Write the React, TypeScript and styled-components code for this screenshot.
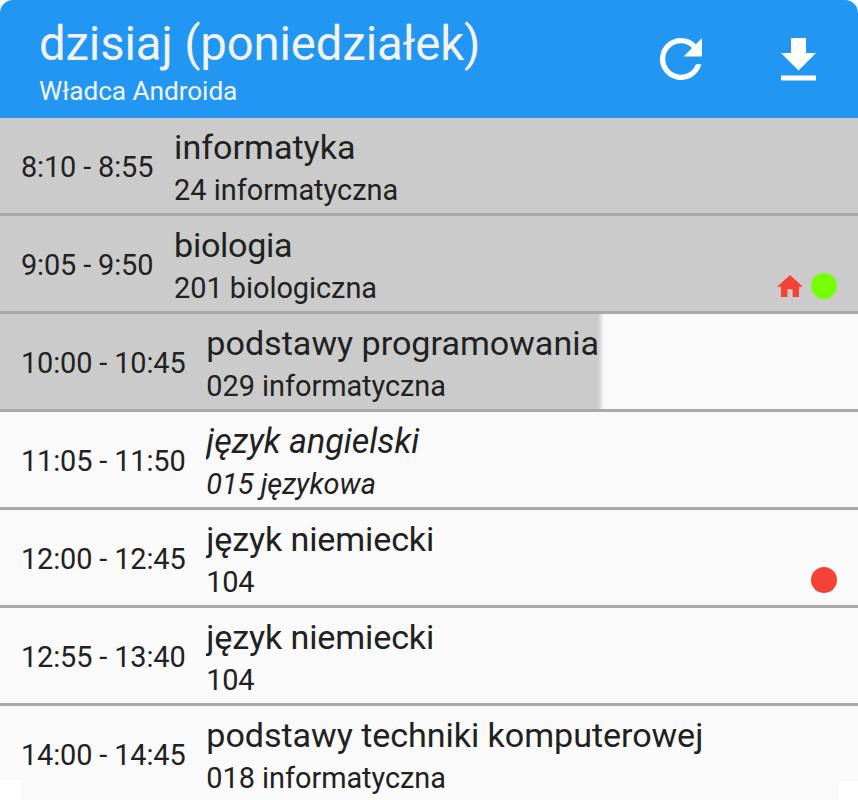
import React from 'react';
import styled, { createGlobalStyle } from 'styled-components';

const GlobalStyle = createGlobalStyle`
  html, body { margin: 0; background: #fff; overflow: hidden; }
  body { font-family: Roboto, "Noto Sans", sans-serif; color: #212121; }
`;

const Widget = styled.main`
  width: 858px;
  height: 800px;
  overflow: hidden;
  border-radius: 13px 13px 0 0;
`;

const Header = styled.header`
  box-sizing: border-box;
  height: 118px;
  padding: 0 39px;
  background: #2196f3;
  color: #f3f3f3;
  display: flex;
  justify-content: space-between;
`;

const Heading = styled.div`
  display: flex;
  flex-direction: column;
  padding-top: 16px;
  white-space: nowrap;
`;

const Title = styled.h1`
  margin: 0;
  font-size: 47.25px;
  font-weight: 400;
  line-height: 56px;
  letter-spacing: -0.12px;
`;

const Subtitle = styled.div`
  font-size: 26.25px;
  line-height: 32px;
  margin-top: 3px;
  letter-spacing: -0.08px;
`;

const Actions = styled.div`
  display: flex;
  align-items: flex-start;
  gap: 79px;
  padding: 38px 3px 0 0;
`;

const IconButton = styled.button`
  display: block;
  padding: 0;
  border: 0;
  background: none;
  color: #fff;
  svg { display: block; fill: currentColor; }
`;

const LessonList = styled.div`
  display: flex;
  flex-direction: column;
`;

const Row = styled.div<{ $elapsed: number }>`
  box-sizing: border-box;
  height: 98px;
  flex: none;
  display: flex;
  align-items: stretch;
  padding: 0 21px;
  border-bottom: 3px solid #a9a9a9;
  background: ${({ $elapsed }) =>
    $elapsed >= 858
      ? '#cbcbcb'
      : $elapsed > 0
        ? `linear-gradient(to right, #cbcbcb ${$elapsed - 6}px, #fafafa ${$elapsed}px)`
        : '#fafafa'};

  &:last-child {
    height: 94px;
    border-bottom: 0;
    background: linear-gradient(#fff, #fff) 0 74px / 21px 20px no-repeat,
      linear-gradient(#fff, #fff) 100% 75px / 19px 19px no-repeat, #fafafa;
  }
`;

const Time = styled.div`
  font-size: 28.9px;
  line-height: 34px;
  padding-top: 32px;
  margin-right: 20.8px;
  letter-spacing: -0.13px;
  white-space: nowrap;
`;

const Details = styled.div<{ $italic?: boolean }>`
  flex: 1;
  overflow: hidden;
  white-space: nowrap;
  font-style: ${({ $italic }) => ($italic ? 'italic' : 'normal')};
`;

const Subject = styled.div<{ $tracking?: number }>`
  font-size: 34.1px;
  line-height: 40px;
  padding-top: 9px;
  letter-spacing: ${({ $tracking = 0 }) => $tracking}px;
`;

const Room = styled.div<{ $tracking?: number }>`
  font-size: 28.9px;
  line-height: 34px;
  margin-top: 6px;
  letter-spacing: ${({ $tracking = 0 }) => $tracking}px;
`;

const Marks = styled.div`
  display: flex;
  align-items: center;
  align-self: flex-end;
  gap: 8px;
  margin-bottom: 12px;
  svg { display: block; }
`;

const Dot = styled.span<{ $color: string }>`
  width: 26px;
  height: 26px;
  border-radius: 50%;
  background: ${({ $color }) => $color};
`;

type Lesson = {
  time: string;
  subject: string;
  room: string;
  subjectTracking?: number;
  roomTracking?: number;
  elapsed?: number;
  italic?: boolean;
  homework?: boolean;
  dot?: string;
};

const lessons: Lesson[] = [
  { time: '8:10 - 8:55', subject: 'informatyka', room: '24 informatyczna', elapsed: 858 },
  { time: '9:05 - 9:50', subject: 'biologia', subjectTracking: -0.3, room: '201 biologiczna', roomTracking: -0.04, elapsed: 858, homework: true, dot: '#76ff03' },
  { time: '10:00 - 10:45', subject: 'podstawy programowania', room: '029 informatyczna', roomTracking: -0.04, elapsed: 604 },
  { time: '11:05 - 11:50', subject: 'język angielski', room: '015 językowa', italic: true },
  { time: '12:00 - 12:45', subject: 'język niemiecki', subjectTracking: -0.13, room: '104', roomTracking: -0.25, dot: '#f44336' },
  { time: '12:55 - 13:40', subject: 'język niemiecki', subjectTracking: -0.13, room: '104', roomTracking: -0.25 },
  { time: '14:00 - 14:45', subject: 'podstawy techniki komputerowej', subjectTracking: -0.05, room: '018 informatyczna', roomTracking: -0.04 },
];

const RefreshIcon = () => (
  <svg width="42" height="42" viewBox="4 4 16 16">
    <path d="M17.65 6.35A7.95 7.95 0 0 0 12 4a8 8 0 1 0 7.73 10h-2.08A6 6 0 1 1 12 6c1.66 0 3.14.69 4.22 1.78L13 11h7V4z" />
  </svg>
);

const DownloadIcon = () => (
  <svg width="35" height="42.5" viewBox="5 3 14 17">
    <path d="M19 9h-4V3H9v6H5l7 7zM5 18v2h14v-2z" />
  </svg>
);

const HomeIcon = () => (
  <svg width="26" height="22" viewBox="2 3 20 17" fill="#f44336">
    <path d="M10 20v-6h4v6h5v-8h3L12 3 2 12h3v8z" />
  </svg>
);

export default function App() {
  return (
    <>
      <GlobalStyle />
      <Widget>
        <Header>
          <Heading>
            <Title>dzisiaj (poniedziałek)</Title>
            <Subtitle>Władca Androida</Subtitle>
          </Heading>
          <Actions>
            <IconButton aria-label="Odśwież"><RefreshIcon /></IconButton>
            <IconButton aria-label="Pobierz"><DownloadIcon /></IconButton>
          </Actions>
        </Header>
        <LessonList>
          {lessons.map((lesson) => (
            <Row key={lesson.time} $elapsed={lesson.elapsed ?? 0}>
              <Time>{lesson.time}</Time>
              <Details $italic={lesson.italic}>
                <Subject $tracking={lesson.subjectTracking}>{lesson.subject}</Subject>
                <Room $tracking={lesson.roomTracking}>{lesson.room}</Room>
              </Details>
              {(lesson.homework || lesson.dot) && (
                <Marks>
                  {lesson.homework && <HomeIcon />}
                  {lesson.dot && <Dot $color={lesson.dot} />}
                </Marks>
              )}
            </Row>
          ))}
        </LessonList>
      </Widget>
    </>
  );
}
